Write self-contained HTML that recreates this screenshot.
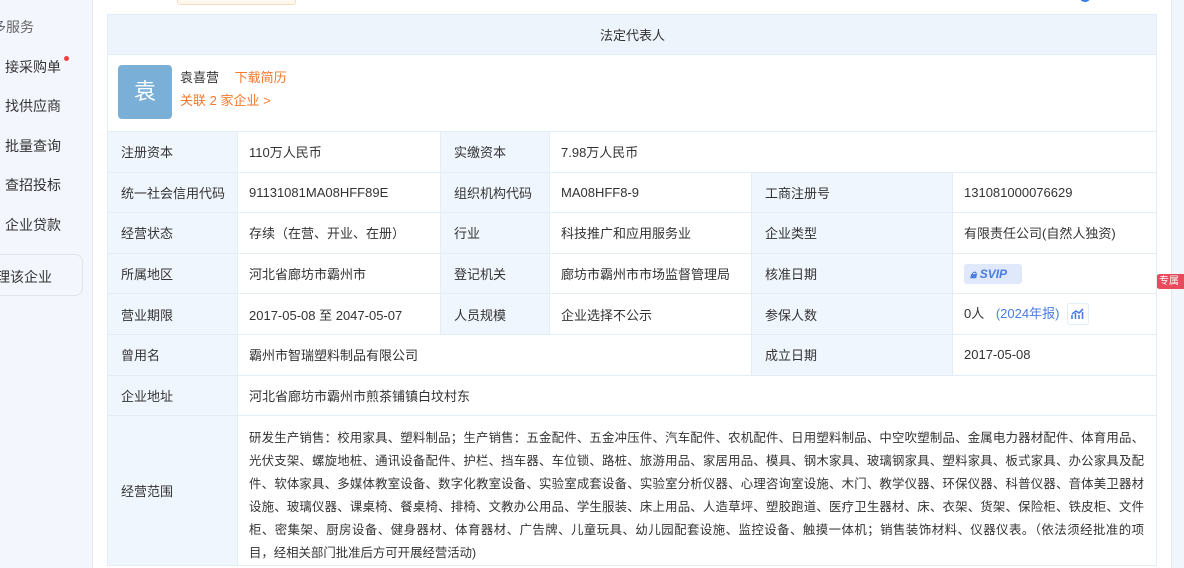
<!DOCTYPE html>
<html><head><meta charset="utf-8"><style>
*{margin:0;padding:0;box-sizing:border-box}
body{width:1184px;height:568px;overflow:hidden;background:#fff;font-family:"Liberation Sans","Noto Sans CJK SC",sans-serif;font-size:13px;color:#333;position:relative}
.side{position:absolute;left:0;top:0;width:93px;height:568px;background:#f3f7fd;border-right:1px solid #e6ebf3}
.side div{position:absolute;left:5px;font-size:14px;color:#333}
.a{position:absolute}
table{position:absolute;left:107px;top:14px;width:1049px;border-collapse:collapse;table-layout:fixed}
td{border:1px solid #e4ecf6;padding:0 10px 0 11px;height:40.6px;vertical-align:middle;overflow:hidden;white-space:nowrap}
td.l{background:#f0f6fd;padding-left:13px}
.hd td{background:#eef4fb;text-align:center;height:40px}
.ln{display:block;width:895px;text-align:justify;text-align-last:justify;white-space:nowrap;height:23px;line-height:23px;font-size:12.4px;overflow:hidden}
</style></head><body>
<div class="side">
<div style="top:17px;left:-8px;color:#666">多服务</div>
<div style="top:57px">接采购单</div>
<span class="a" style="left:64px;top:56px;width:5px;height:5px;border-radius:50%;background:#f04040"></span>
<div style="top:96px">找供应商</div>
<div style="top:136px">批量查询</div>
<div style="top:175px">查招投标</div>
<div style="top:215px">企业贷款</div>
<div style="top:254px;left:-20px;width:103px;height:42px;border:1px solid #dde4ee;border-radius:8px;background:#f3f7fd"></div>
<div style="top:267px;left:-4px">理该企业</div>
</div>
<div class="a" style="left:177px;top:-4px;width:119px;height:9px;border:1px solid #f5dcc0;background:#fff8ee;border-radius:3px"></div>
<div class="a" style="left:1080px;top:-6px;width:10px;height:8px;border-radius:50%;background:#3a7ef0"></div>
<div class="a" style="left:1171px;top:0;width:13px;height:568px;background:#f1f5fc;border-left:1px solid #e6ebf3"></div>
<div class="a" style="left:1156px;top:274px;width:30px;height:15px;background:#e94a5c;border-radius:4px 0 0 4px;color:#fff;font-size:10px;line-height:15px;padding-left:3px;overflow:hidden;white-space:nowrap">专属</div>
<table>
<colgroup><col style="width:130px"><col style="width:203px"><col style="width:109px"><col style="width:202px"><col style="width:201px"><col style="width:204px"></colgroup>
<tr class="hd"><td colspan="6">法定代表人</td></tr>
<tr><td colspan="6" style="height:77px;position:relative">
<div class="a" style="left:10px;top:10px;width:54px;height:54px;background:#7aafd8;border-radius:4px;color:#fff;font-size:22px;text-align:center;line-height:54px">袁</div>
<div class="a" style="left:72px;top:12px;font-size:13px">袁喜营 <span style="color:#f5782d;margin-left:12px">下载简历</span></div>
<div class="a" style="left:72px;top:35px;color:#f5782d">关联 2 家企业 &gt;</div>
</td></tr>
<tr><td class="l">注册资本</td><td>110万人民币</td><td class="l">实缴资本</td><td colspan="3">7.98万人民币</td></tr>
<tr><td class="l">统一社会信用代码</td><td>91131081MA08HFF89E</td><td class="l">组织机构代码</td><td>MA08HFF8-9</td><td class="l">工商注册号</td><td>131081000076629</td></tr>
<tr><td class="l">经营状态</td><td>存续（在营、开业、在册）</td><td class="l">行业</td><td>科技推广和应用服务业</td><td class="l">企业类型</td><td>有限责任公司(自然人独资)</td></tr>
<tr><td class="l">所属地区</td><td>河北省廊坊市霸州市</td><td class="l">登记机关</td><td>廊坊市霸州市市场监督管理局</td><td class="l">核准日期</td><td><span style="display:inline-block;width:58px;height:20px;background:#dfe9fb;border-radius:3px;color:#4a7de0;font-style:italic;font-weight:bold;font-size:12px;line-height:20px;padding-left:6px">🔒︎ SVIP</span></td></tr>
<tr><td class="l">营业期限</td><td>2017-05-08 至 2047-05-07</td><td class="l">人员规模</td><td>企业选择不公示</td><td class="l">参保人数</td><td>0人 <span style="color:#4a7de0;margin-left:8px">(2024年报)</span><span style="display:inline-block;width:22px;height:22px;border:1px solid #e4ecf6;border-radius:3px;vertical-align:middle;margin-left:8px;position:relative"><svg width="14" height="12" style="position:absolute;left:3px;top:4px" viewBox="0 0 14 12" fill="none" stroke="#4a7de0" stroke-width="1.6"><path d="M1 11V7M4.5 11V5M8 11V7M11.5 11V4M1 6L5 3L8 5L12 1"/></svg></span></td></tr>
<tr><td class="l">曾用名</td><td colspan="3">霸州市智瑞塑料制品有限公司</td><td class="l">成立日期</td><td>2017-05-08</td></tr>
<tr><td class="l">企业地址</td><td colspan="5">河北省廊坊市霸州市煎茶铺镇白坟村东</td></tr>
<tr><td class="l" style="height:148px">经营范围</td><td colspan="5" style="padding:11px 10px 0 11px">
<span class="ln">研发生产销售：校用家具、塑料制品；生产销售：五金配件、五金冲压件、汽车配件、农机配件、日用塑料制品、中空吹塑制品、金属电力器材配件、体育用品、</span>
<span class="ln">光伏支架、螺旋地桩、通讯设备配件、护栏、挡车器、车位锁、路桩、旅游用品、家居用品、模具、钢木家具、玻璃钢家具、塑料家具、板式家具、办公家具及配</span>
<span class="ln">件、软体家具、多媒体教室设备、数字化教室设备、实验室成套设备、实验室分析仪器、心理咨询室设施、木门、教学仪器、环保仪器、科普仪器、音体美卫器材</span>
<span class="ln">设施、玻璃仪器、课桌椅、餐桌椅、排椅、文教办公用品、学生服装、床上用品、人造草坪、塑胶跑道、医疗卫生器材、床、衣架、货架、保险柜、铁皮柜、文件</span>
<span class="ln">柜、密集架、厨房设备、健身器材、体育器材、广告牌、儿童玩具、幼儿园配套设施、监控设备、触摸一体机；销售装饰材料、仪器仪表。（依法须经批准的项</span>
<span class="ln" style="text-align-last:left">目，经相关部门批准后方可开展经营活动)</span>
</td></tr>
</table>
</body></html>
